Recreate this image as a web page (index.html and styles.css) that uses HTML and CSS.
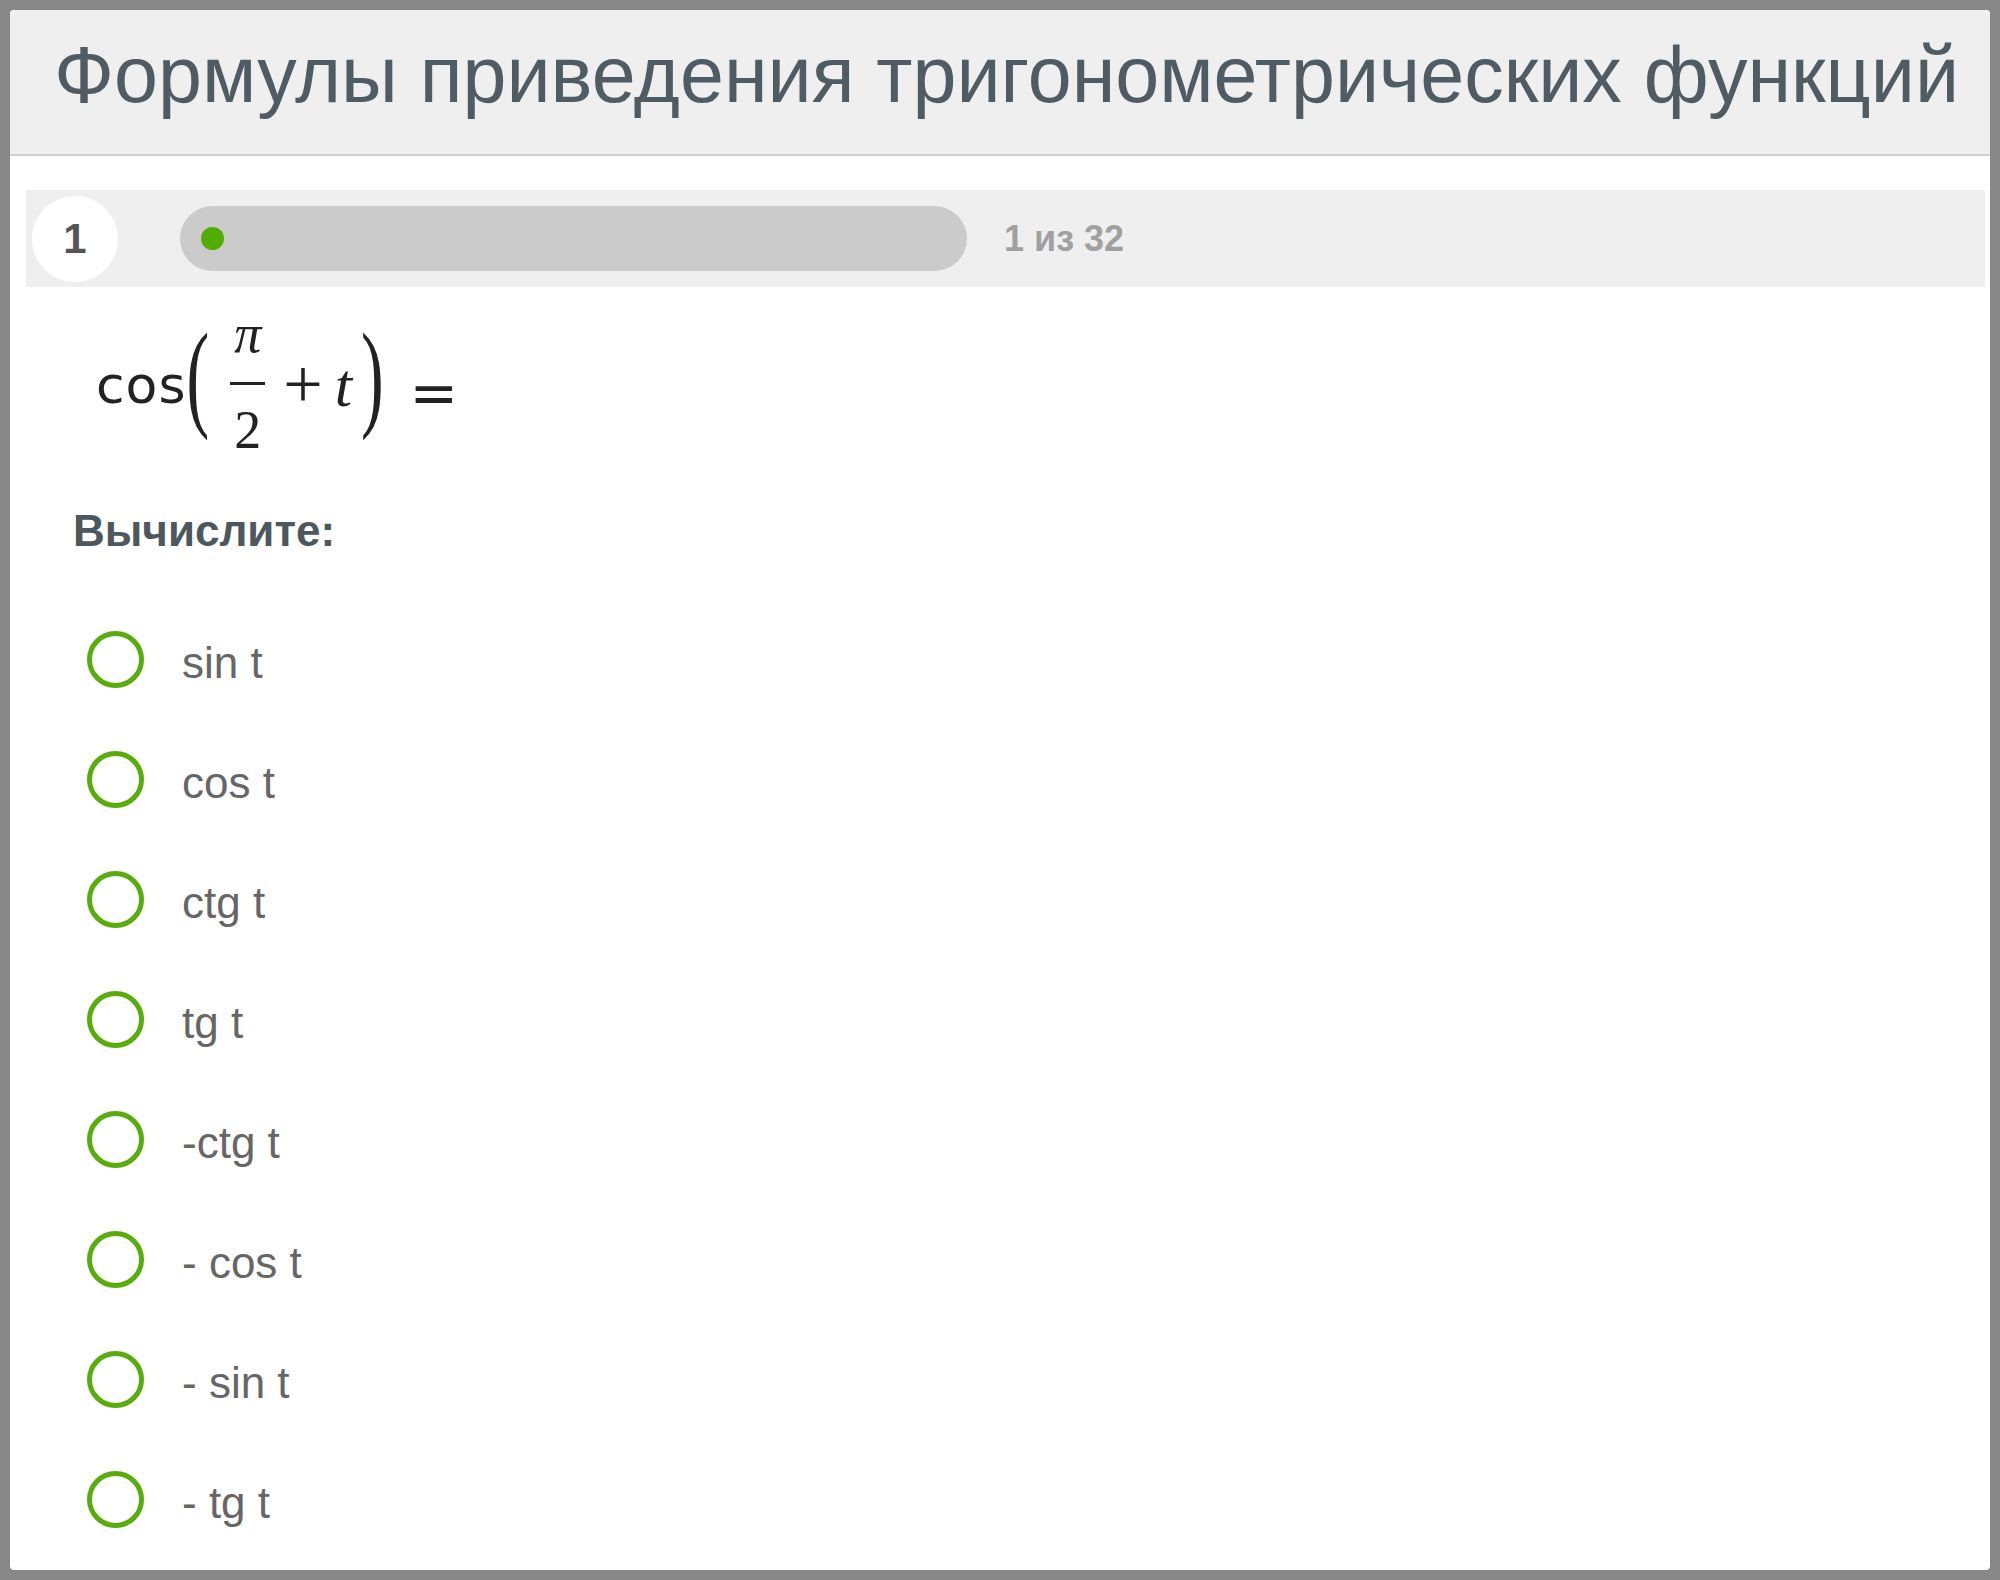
FILE: index.html
```html
<!DOCTYPE html>
<html lang="ru">
<head>
    <meta charset="UTF-8">
    <meta name="viewport" content="width=device-width, initial-scale=1.0">
    <title>Формулы приведения</title>
    <link rel="stylesheet" href="styles.css">
</head>
<body>
    <div class="test-frame">
        <div class="test-header">
            <h1 class="test-title">Формулы приведения тригонометрических функций</h1>
        </div>

        <div class="progress-row">
            <div class="question-num">1</div>
            <div class="progress-bar">
                <span class="progress-dot"></span>
            </div>
            <div class="progress-count">1 из 32</div>
        </div>

        <div class="formula">
            <span class="fn">cos</span>
            <span class="paren open">(</span>
            <span class="frac">
                <span class="num">π</span>
                <span class="den">2</span>
            </span>
            <span class="op">+</span>
            <span class="var">t</span>
            <span class="paren close">)</span>
            <span class="eq">=</span>
        </div>

        <div class="task">Вычислите:</div>

        <ul class="answers">
            <li class="answer"><span class="radio"></span><span class="answer-text">sin t</span></li>
            <li class="answer"><span class="radio"></span><span class="answer-text">cos t</span></li>
            <li class="answer"><span class="radio"></span><span class="answer-text">ctg t</span></li>
            <li class="answer"><span class="radio"></span><span class="answer-text">tg t</span></li>
            <li class="answer"><span class="radio"></span><span class="answer-text">-ctg t</span></li>
            <li class="answer"><span class="radio"></span><span class="answer-text">- cos t</span></li>
            <li class="answer"><span class="radio"></span><span class="answer-text">- sin t</span></li>
            <li class="answer"><span class="radio"></span><span class="answer-text">- tg t</span></li>
        </ul>
    </div>
</body>
</html>
```

FILE: styles.css
```css
html, body {
    margin: 0;
    padding: 0;
    background: #888;
}
body {
    font-family: "Liberation Sans", Arial, sans-serif;
}
.test-frame {
    box-sizing: border-box;
    width: 2000px;
    height: 1580px;
    border: 10px solid #888;
    border-radius: 14px;
    background: #fff;
    overflow: hidden;
}
.test-header {
    height: 144px;
    background: #efefef;
    border-bottom: 2px solid #cfcfcf;
}
.test-title {
    margin: 0;
    padding-left: 44px;
    font-size: 79px;
    font-weight: normal;
    line-height: 129px;
    color: #505c64;
    white-space: nowrap;
}

/* progress */
.progress-row {
    display: flex;
    align-items: center;
    height: 97px;
    margin: 34px 5px 0 16px;
    background: #efefef;
}
.question-num {
    display: flex;
    align-items: center;
    justify-content: center;
    width: 86px;
    height: 86px;
    margin-left: 6px;
    border-radius: 50%;
    background: #fff;
    font-size: 42px;
    font-weight: bold;
    color: #555;
}
.progress-bar {
    display: flex;
    align-items: center;
    box-sizing: border-box;
    width: 787px;
    height: 65px;
    margin-left: 62px;
    padding-left: 21px;
    border-radius: 33px;
    background: #cbcbcb;
}
.progress-dot {
    width: 23px;
    height: 23px;
    border-radius: 50%;
    background: #52ad00;
}
.progress-count {
    margin-left: 37px;
    font-size: 36px;
    font-weight: bold;
    color: #a0a0a0;
}

/* formula */
.formula {
    display: flex;
    align-items: center;
    height: 156px;
    margin: 20px 0 0 86px;
    color: #222;
}
.fn {
    font-family: "DejaVu Sans", sans-serif;
    font-size: 52px;
    letter-spacing: 1px;
}
.paren {
    display: inline-block;
    margin-bottom: 20px;
    font-family: "Liberation Serif", serif;
    font-size: 68px;
    line-height: 1;
    transform: scaleY(1.75);
}
.paren.close {
    margin-left: 9px;
}
.frac {
    display: flex;
    flex-direction: column;
    align-items: center;
    width: 35px;
    margin-left: 21px;
    font-family: "Liberation Serif", serif;
    font-size: 54px;
    line-height: 1;
}
.num {
    box-sizing: border-box;
    width: 35px;
    padding-bottom: 21px;
    border-bottom: 3px solid #222;
    text-align: center;
    font-style: italic;
}
.den {
    padding: 18px 0 6px;
}
.op {
    margin-left: 18px;
    font-family: "Liberation Serif", serif;
    font-size: 70px;
}
.var {
    margin-left: 12px;
    font-family: "Liberation Serif", serif;
    font-style: italic;
    font-size: 62px;
}
.eq {
    margin: 16px 0 0 26px;
    font-family: "DejaVu Sans", sans-serif;
    font-size: 58px;
}

/* question */
.task {
    margin: 43px 0 0 63px;
    font-size: 44px;
    font-weight: bold;
    color: #4d575e;
}
.answers {
    list-style: none;
    margin: 43px 0 0;
    padding: 0;
}
.answer {
    display: flex;
    align-items: center;
    height: 120px;
    padding-left: 77px;
}
.radio {
    box-sizing: border-box;
    width: 57px;
    height: 57px;
    border: 5px solid #56ad0c;
    border-radius: 50%;
}
.answer-text {
    margin: 8px 0 0 38px;
    font-size: 44px;
    color: #666;
}
```
